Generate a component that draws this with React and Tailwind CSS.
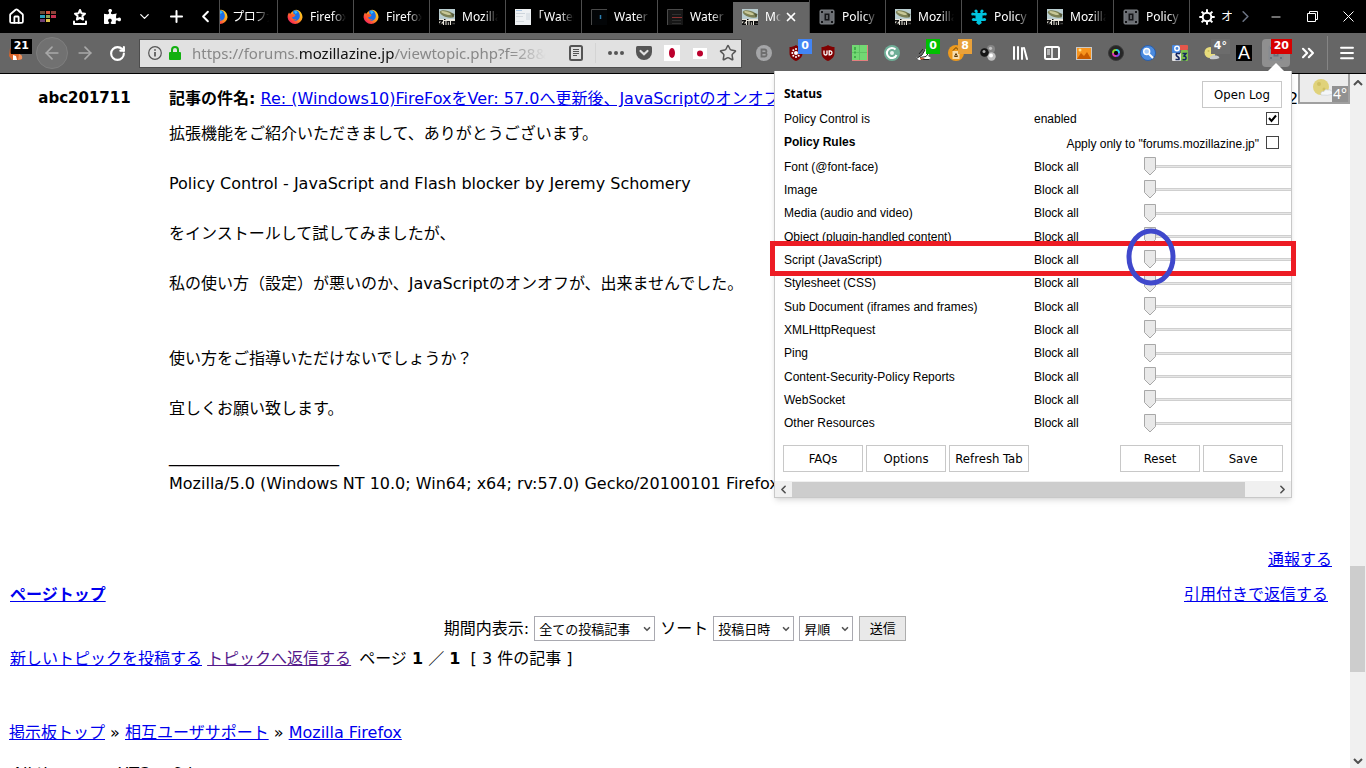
import { useState } from 'react'
import { Home, Plus, ChevronDown, ChevronLeft, ChevronRight, ArrowLeft, ArrowRight, RotateCw, X, Minus, Star, Menu, ChevronsRight } from 'lucide-react'
import { FaPuzzlePiece } from 'react-icons/fa'

// --- FAVICONS ---
function FirefoxIcon() {
  return (
    <svg viewBox="0 0 16 16" className="w-4 h-4 shrink-0">
      <defs>
        <linearGradient id="fxBody" x1="1" y1="0" x2="0" y2="1">
          <stop offset="0" stopColor="#ffe226" />
          <stop offset="0.45" stopColor="#ff9a1f" />
          <stop offset="0.75" stopColor="#ff3b47" />
          <stop offset="1" stopColor="#d5157f" />
        </linearGradient>
      </defs>
      <path d="M2 3.5 L3 5 C5 2 7 1 9 .7 C13 1 15.6 4.5 15.5 8.5 A7.5 7.3 0 0 1 .6 8.5 C.6 6.500 1 5 2 3.500Z" fill="url(#fxBody)" />
      <path d="M6 2 C8 .2 12 1.500 12.500 5 C13.600 8 12 11.500 8.600 11.700 C6 11.800 4.500 10 4.500 8 L7 7.800 L8.500 6 L6.500 5Z" fill="#1a6fe8" />
      <path d="M7 2.500 C8.500 1.500 10 2 10.500 3.500 L8.500 5Z" fill="#2fc0ff" />
      <path d="M2.500 5 L6 5.200 L8.400 6 L7 7.600 L5 8.500 C5.500 10 7.500 11 9.500 10 C8 12.500 4.500 12 3.300 9.500Z" fill="#ff5a2a" />
    </svg>
  )
}

function ZineIcon() {
  return (
    <svg viewBox="0 0 16 16" className="w-4 h-4 shrink-0">
      <rect width="16" height="16" fill="#b9cdd0" />
      <rect y="10" width="16" height="6" fill="#e9e6dc" />
      <ellipse cx="8" cy="5" rx="7.500" ry="3.200" fill="#7c8055" transform="rotate(18 8 5)" />
      <ellipse cx="7" cy="4" rx="5" ry="1.300" fill="#c8c796" transform="rotate(18 7 4)" />
      <path d="M12 4 L15.500 5 L14 9Z" fill="#55583a" />
      <path d="M0 11h4v1.200L2 14.500h2V16H0v-1.500L2 12.500H0zM5 10h1.500v1H5zM5 12h1.500v4H5zM7.500 12h3.500v4H9.700v-2.700h-.8V16H7.500zM12 12h4v2.700h-2.500v.3H16v1h-4z" fill="#111" />
    </svg>
  )
}

function PageIcon() {
  return (
    <svg viewBox="0 0 16 16" className="w-4 h-4 shrink-0">
      <rect width="16" height="16" fill="#eef1f3" />
      <rect x="1" y="1" width="6" height="1" fill="#a9c4e0" />
      <rect x="1" y="4" width="9" height="1" fill="#cdd5dc" />
      <rect x="1" y="7" width="7" height="1" fill="#d4dade" />
      <rect x="11" y="4" width="4" height="7" fill="#dde3e8" />
      <rect x="1" y="12" width="8" height="1" fill="#d4dade" />
    </svg>
  )
}

function DarkIcon({ red }) {
  return (
    <svg viewBox="0 0 16 16" className="w-4 h-4 shrink-0">
      <rect width="16" height="16" fill={red ? '#171717' : '#030507'} />
      <path d="M.5 16V.500H16" fill="none" stroke="#4a4a4a" />
      {red ? <path d="M5 8.500h10" stroke="#8c3030" /> : <path d="M9.500 6v4" stroke="#2b7fb0" strokeWidth="1.500" />}
      {red && <path d="M5 11.500h9M5 14.500h9M5 5.500h9" stroke="#303030" />}
    </svg>
  )
}

function PolicyIcon({ dim }) {
  return (
    <svg viewBox="0 0 16 16" className="w-4 h-4 shrink-0">
      <rect x="1" y="1" width="14" height="14" rx="1" fill={dim ? '#8a8d90' : '#6b6e73'} stroke={dim ? '#858a8f' : '#7d8085'} />
      <g fill={dim ? '#66717c' : '#141518'}>
        <path d="M2 2h2v2H2zM12 2h2v2h-2zM2 12h2v2H2zM12 12h2v2h-2z" />
        <path d="M5.500 4.500h5v7h-5zM7.200 6v4h1.600V6z" fillRule="evenodd" />
      </g>
    </svg>
  )
}

function CyanPuzzleIcon() {
  return (
    <svg viewBox="0 0 16 16" className="w-4 h-4 shrink-0" fill="#00c4de">
      <path d="M3 4h10v2.500h-1.500V9.500H13V12h-3l.8 2L8 16l-2.800-2L6 12H3V9.500h1.500V6.500H3z" />
      <circle cx="5" cy="2" r="1.600" /><circle cx="11" cy="2" r="1.600" />
      <path d="M4.500 2h2v3h-2zM9.500 2h2v3h-2z" />
      <circle cx="1.800" cy="5" r="1.600" /><circle cx="14.200" cy="5" r="1.600" />
      <circle cx="2.500" cy="10.500" r="1.600" /><circle cx="13.500" cy="10.500" r="1.600" />
    </svg>
  )
}

function GearIcon() {
  return (
    <svg viewBox="0 0 16 16" className="w-4 h-4 shrink-0" fill="none" stroke="#fff" strokeWidth="2">
      <circle cx="8" cy="8" r="4.300" />
      <path d="M8 .3v3.200M8 12.500v3.200M.3 8h3.200M12.500 8h3.200M2.600 2.600l2.200 2.200M11.200 11.200l2.200 2.200M2.600 13.400l2.200-2.200M11.200 4.800l2.200-2.200" />
    </svg>
  )
}

const tabs = [
  { icon: <FirefoxIcon />, title: 'Firefox' },
  { icon: <FirefoxIcon />, title: 'Firefox' },
  { icon: <ZineIcon />, title: 'Mozilla' },
  { icon: <PageIcon />, title: '「Water' },
  { icon: <DarkIcon />, title: 'Water' },
  { icon: <DarkIcon red />, title: 'Water' },
  { icon: <ZineIcon />, title: 'Moz', active: true },
  { icon: <PolicyIcon />, title: 'Policy' },
  { icon: <ZineIcon />, title: 'Mozilla' },
  { icon: <CyanPuzzleIcon />, title: 'Policy' },
  { icon: <ZineIcon />, title: 'Mozilla' },
  { icon: <PolicyIcon />, title: 'Policy' },
]

function BarButton({ label, className = 'w-8', children }) {
  return (
    <button aria-label={label} className={`${className} h-full shrink-0 flex items-center justify-center relative`}>
      {children}
    </button>
  )
}

function Tab({ icon, title, active }) {
  return (
    <div className={`w-[76px] shrink-0 flex items-center gap-[7px] pl-[9px] overflow-hidden ${active ? 'bg-[#666] mt-0.5 h-[31px] pb-0.5' : 'h-full border-l border-[#4d4d4d]'}`}>
      {icon}
      <span className={`overflow-hidden whitespace-nowrap text-xs [mask-image:linear-gradient(to_right,#000_60%,transparent)] ${active ? 'w-4' : 'w-9 [font-feature-settings:"halt"]'}`}>{title}</span>
      {active && <button aria-label="Close tab" className="-ml-1"><X size={14} strokeWidth={3} /></button>}
    </div>
  )
}

function TabBar() {
  return (
    <div className="h-[33px] shrink-0 flex bg-black text-white">
      <BarButton label="Home"><Home size={17} strokeWidth={2.500} /></BarButton>
      <BarButton label="Tiles">
        <svg viewBox="0 0 16 11" className="w-4 h-[11px]">
          <path d="M0 0h5v3H0z" fill="#6d4a36" /><path d="M6 0h4v3H6z" fill="#d4533c" /><path d="M11 0h5v3h-5z" fill="#8d4038" />
          <path d="M0 4h5v3H0z" fill="#2aa0bd" /><path d="M6 4h4v3H6z" fill="#8aa65a" /><path d="M11 4h5v3h-5z" fill="#c7304f" />
          <path d="M0 8h5v3H0z" fill="#6e3f74" /><path d="M6 8h4v3H6z" fill="#e0c24a" />
        </svg>
      </BarButton>
      <BarButton label="Bookmarks">
        <svg viewBox="0 0 16 18" className="w-4 h-[18px]" fill="none" stroke="#fff" strokeWidth="2" strokeLinejoin="round">
          <path d="M8 2l1.500 3.300 3.500.4-2.600 2.400.7 3.400L8 9.800l-3.100 1.700.7-3.400L3 5.700l3.500-.4z" />
          <path d="M2 13.500v2.500h12v-2.500" strokeLinecap="round" />
        </svg>
      </BarButton>
      <BarButton label="Add-ons"><FaPuzzlePiece size={17} /></BarButton>
      <BarButton label="More"><ChevronDown size={15} strokeWidth={2} /></BarButton>
      <BarButton label="New tab"><Plus size={19} strokeWidth={2.500} /></BarButton>
      <BarButton label="Scroll tabs left" className="w-[27px]"><ChevronLeft size={19} strokeWidth={2.500} /></BarButton>
      <div className="flex flex-1 min-w-0 overflow-hidden">
        <div className="w-[58px] shrink-0 h-full flex items-center justify-end border-l border-[#4d4d4d] overflow-hidden">
          <div className="w-2 flex justify-end overflow-hidden"><FirefoxIcon /></div>
          <span className="w-9 ml-[5px] mr-2 overflow-hidden whitespace-nowrap text-xs [font-feature-settings:'palt'] [mask-image:linear-gradient(to_right,#000_60%,transparent)]">プロファ</span>
        </div>
        {tabs.map((tab, i) => <Tab key={i} {...tab} />)}
        <div className="h-full flex-1 flex items-center gap-1.5 pl-[9px] border-l border-[#4d4d4d] overflow-hidden">
          <GearIcon />
          <span className="text-xs whitespace-nowrap">オ</span>
        </div>
      </div>
      <BarButton label="Scroll tabs right" className="w-[26px]"><ChevronRight size={19} strokeWidth={2} className="text-gray-500" /></BarButton>
      <BarButton label="Minimize" className="w-9"><Minus size={14} strokeWidth={1.500} /></BarButton>
      <BarButton label="Restore" className="w-9">
        <svg viewBox="0 0 11 11" className="w-[11px] h-[11px]" fill="none" stroke="#fff"><path d="M.5 2.500h8v8h-8zM2.500 2.500v-2h8v8h-2" /></svg>
      </BarButton>
      <BarButton label="Close" className="w-9">
        <svg viewBox="0 0 11 11" className="w-[11px] h-[11px]" stroke="#fff"><path d="M.5.500l10 10M10.500.500l-10 10" /></svg>
      </BarButton>
    </div>
  )
}

function Badge({ className, children }) {
  return (
    <span className={`absolute top-1.5 h-[15px] min-w-[14px] px-[3px] flex items-center justify-center text-[11px] font-bold text-white font-['DejaVu_Sans',sans-serif] ${className}`}>
      {children}
    </span>
  )
}

const svg16 = { viewBox: '0 0 16 16', className: 'w-4 h-4' }

function Toolbar() {
  return (
    <div className="flex h-full text-white">
      <BarButton label="B">
        <svg {...svg16}><circle cx="8" cy="8" r="8" fill="#a5a6a8" /><path d="M5.500 4.500h3.200a1.700 1.700 0 0 1 .6 3.300 1.900 1.900 0 0 1-.5 3.700H5.500z M5.500 8h3.500" fill="none" stroke="#6e6e6e" strokeWidth="1.800" /></svg>
      </BarButton>
      <BarButton label="Shield">
        <svg {...svg16}>
          <path d="M8 0C6 1.500 3.500 2 1.500 2v6c0 4 3 6.500 6.500 8 3.500-1.500 6.500-4 6.500-8V2C12.500 2 10 1.500 8 0z" fill="#800000" />
          <g fill="#fff"><circle cx="8" cy="8" r="2" /><circle cx="8" cy="4" r="1" /><circle cx="8" cy="12" r="1" /><circle cx="4.300" cy="8" r="1" /><circle cx="11.700" cy="8" r="1" /><circle cx="5.300" cy="5.300" r="1" /><circle cx="5.300" cy="10.700" r="1" /><circle cx="10.700" cy="10.700" r="1" /></g>
        </svg>
        <Badge className="bg-[#4285f4] right-0">0</Badge>
      </BarButton>
      <BarButton label="uBlock">
        <svg {...svg16}>
          <path d="M8 0C6 1.500 3.500 2 1.500 2v6c0 4 3 6.500 6.500 8 3.500-1.500 6.500-4 6.500-8V2C12.500 2 10 1.500 8 0z" fill="#800000" />
          <path d="M4 5.500v3q0 1.500 1.500 1.500T7 8.500v-3" fill="none" stroke="#fff" strokeWidth="1.300" /><path d="M9.200 5.800v4h1q1.800-.3 1.800-2t-1.800-2z" fill="none" stroke="#fff" strokeWidth="1.300" />
        </svg>
      </BarButton>
      <BarButton label="Grid">
        <svg {...svg16}><rect width="16" height="16" fill="#e37f7f" /><rect width="15" height="15" fill="#72d873" /><path d="M7.500 0v15M0 7.500h15" stroke="#5fc264" /><path d="M3 2v3M3 6.500v2M3 11v2" stroke="#3fae49" strokeWidth="2" /></svg>
      </BarButton>
      <BarButton label="Reload session">
        <svg {...svg16}><circle cx="8" cy="8" r="8" fill="#6fae97" /><path d="M11.500 4.500A5 5 0 1 0 12.500 10" fill="none" stroke="#fff" strokeWidth="2" /><circle cx="8" cy="8" r="2" fill="#e9f3ef" /></svg>
      </BarButton>
      <BarButton label="Privacy">
        <svg {...svg16}><path d="M0 13l5-2 6-9 4 4-3 5 3 2-4 2H3z" fill="#fff" /><path d="M.5 13.500L6 10l3-5M4 12.500l6-1 3-4M3 9l4-5M5 14.500h8" fill="none" stroke="#222" /><path d="M4 12.500l5 .5-2 1.500H4z" fill="#c96a4a" /></svg>
        <Badge className="bg-[#00c000] right-0">0</Badge>
      </BarButton>
      <BarButton label="Clean">
        <svg {...svg16}><circle cx="8" cy="8" r="8" fill="#ef9a1c" /><path d="M4.500 6h7v8h-7z" fill="#f7dcae" /><path d="M6.500 11.500L8 8.500l1.500 3zM5 5.500l3-3 3 3" fill="none" stroke="#5c3a08" /></svg>
        <Badge className="bg-[#e9a13a] right-0">8</Badge>
      </BarButton>
      <BarButton label="Spheres">
        <svg {...svg16}><circle cx="11" cy="4" r="4" fill="#858585" /><circle cx="10.500" cy="3.300" r="1.600" fill="#c4c4c4" /><circle cx="11.500" cy="11.500" r="4.200" fill="#bfbfbf" /><circle cx="11" cy="10.500" r="2" fill="#fff" /><circle cx="4.500" cy="7.500" r="4.300" fill="#151515" /><circle cx="4" cy="6.500" r="1.500" fill="#aaa" /></svg>
      </BarButton>
      <BarButton label="Library">
        <svg {...svg16} stroke="#fff" strokeWidth="2" strokeLinecap="round"><path d="M2 2v12M6 2v12M10 3v11M12 3l3 11" /></svg>
      </BarButton>
      <BarButton label="Sidebar">
        <svg {...svg16} fill="none" stroke="#fff"><rect x="1" y="2" width="14" height="12" rx="1.500" strokeWidth="2" /><path d="M8 2v12" strokeWidth="1.500" /><path d="M3 5h3M3 7h3M3 9h3" /></svg>
      </BarButton>
      <BarButton label="Images">
        <svg {...svg16}><rect x=".5" y="2.500" width="15" height="12" fill="#f7941e" stroke="#c9c9c9" /><path d="M1 14l4-6 3 3 3-4 4 7z" fill="#c85a00" /><circle cx="4" cy="5" r="1.500" fill="#ffe08a" /></svg>
      </BarButton>
      <BarButton label="Colour lens">
        <svg {...svg16} fill="none" strokeWidth="2"><circle cx="8" cy="8" r="7.500" fill="#262626" stroke="#3a3a3a" strokeWidth="1" /><path d="M8 5A3 3 0 0 1 11 8" stroke="#2bd4e8" /><path d="M11 8A3 3 0 0 1 8 11" stroke="#7a4ce0" /><path d="M8 11A3 3 0 0 1 5 8" stroke="#e03bb0" /><path d="M5 8A3 3 0 0 1 8 5" stroke="#8fd42b" /><circle cx="8" cy="8" r="2" fill="#050505" /></svg>
      </BarButton>
      <BarButton label="Search">
        <svg {...svg16}><circle cx="8" cy="8" r="7.500" fill="#4a8be0" stroke="#2b5ea8" /><circle cx="6.700" cy="6.500" r="3" fill="#a9cdfa" stroke="#fff" strokeWidth="1.400" /><path d="M9 9l4 4" stroke="#fff" strokeWidth="2" /></svg>
      </BarButton>
      <BarButton label="S3">
        <svg {...svg16}>
          <rect x="7" width="9" height="5" rx="1" fill="#e4574b" /><rect x="9" y="5" width="7" height="11" rx="1" fill="#7cc04b" /><rect width="8" height="8" rx="1" fill="#4a88df" /><rect y="8" width="9" height="8" rx="1" fill="#e4e4e4" />
          <circle cx="5" cy="3.500" r="2.200" fill="none" stroke="#fff" strokeWidth="1.500" />
          <path d="M8 8.500H4.500Q3.500 10.500 5.500 11.500T7 14.500H3.500M10.500 8.500h3.500l-2 2.500q2.500.5 2 2.500T10.500 14.500" fill="none" stroke="#16255f" strokeWidth="1.500" />
        </svg>
      </BarButton>
      <BarButton label="Weather">
        <svg {...svg16}><circle cx="6" cy="7.500" r="5.500" fill="#e8dc7c" /><circle cx="4.500" cy="6" r="1" fill="#cfc05c" /><path d="M6 14q-1-3 2-3 1-2 3.500-.5Q15 10 15.500 13q-4 2-9.500 1z" fill="#c9ccd0" /></svg>
        <Badge className="bg-[#6c6c6c] -right-0.5">4°</Badge>
      </BarButton>
      <BarButton label="Font">
        <span className="w-4 h-4 bg-black flex items-center justify-center text-lg leading-4 font-['Liberation_Sans',sans-serif]">A</span>
      </BarButton>
      <BarButton label="Policy Control">
        <span className="w-7 h-7 rounded-sm bg-[#8f8f8f] flex items-center justify-center"><PolicyIcon dim /></span>
        <Badge className="bg-[#d70000] right-0">20</Badge>
        <svg viewBox="0 0 20 10" className="absolute left-1.5 bottom-0 w-5 h-[10px]"><path d="M0 10L10 0l10 10z" fill="#fff" /></svg>
      </BarButton>
      <BarButton label="More tools"><ChevronsRight size={20} strokeWidth={2.500} /></BarButton>
      <div className="w-px h-[34px] bg-[#858585] my-[3px] ml-[3px]" />
      <BarButton label="Menu" className="w-[38px]"><Menu size={18} strokeWidth={2.500} /></BarButton>
    </div>
  )
}

function NavBar() {
  return (
    <div className="h-[41px] shrink-0 flex items-center bg-[#666] border-b border-black text-white">
      <BarButton label="Fox" className="w-9">
        <svg viewBox="0 0 16 16" className="w-4 h-4 mr-1"><path d="M2 3l4 4 4 1 4 3v3l-3 1H4l-3-4z" fill="#d9642a" /><path d="M5 10l3 1 1 4H5z" fill="#fff" /><path d="M11 9q4 1 3 5l-4 1z" fill="#f0905a" /><path d="M2 3l2 4-2 2z" fill="#8a3a16" /></svg>
        <Badge className="bg-black right-1">21</Badge>
      </BarButton>
      <button aria-label="Back" className="w-8 h-8 shrink-0 rounded-full border border-[#7e7e7e] bg-[#717171] text-[#a9a9a9] flex items-center justify-center"><ArrowLeft size={20} strokeWidth={2} /></button>
      <BarButton label="Forward" className="w-[34px]"><ArrowRight size={20} strokeWidth={2} className="text-[#a9a9a9]" /></BarButton>
      <BarButton label="Reload" className="w-[31px]"><RotateCw size={17} strokeWidth={3} /></BarButton>
      <div className="flex-1 min-w-0 h-[29px] ml-1.5 mr-1.5 flex items-center bg-[#e1e1e1] border border-[#4d4d4d] text-[#555]">
        <svg viewBox="0 0 14 14" className="w-[14px] h-[14px] ml-2 shrink-0" fill="none" stroke="#555"><circle cx="7" cy="7" r="6.300" strokeWidth="1.200" /><path d="M7 6v4.500M7 3.300v1.500" strokeWidth="1.700" /></svg>
        <svg viewBox="0 0 12 14" className="w-3 h-[14px] ml-[7px] shrink-0"><path d="M3 7V4a3 3 0 0 1 6 0v3" fill="none" stroke="#12b010" strokeWidth="2" /><rect y="6" width="12" height="8" rx="1" fill="#12b010" /></svg>
        <div className="flex-1 min-w-0 pl-[11px] overflow-hidden whitespace-nowrap text-[15px] text-[#888]">
          <span className="inline-block [mask-image:linear-gradient(to_right,#000_90%,transparent)]">
            https://forums.<span className="text-[#111]">mozillazine.jp</span>/viewtopic.php?f=28&amp;
          </span>
        </div>
        <svg viewBox="0 0 14 16" className="w-[14px] h-4 shrink-0" fill="none" stroke="#555"><rect x="1" y="1" width="12" height="14" rx="1.500" strokeWidth="2" /><path d="M4 4.500h6M4 6.500h6M4 8.500h6M4 10.500h4" /></svg>
        <div className="w-px h-5 bg-[#d4d4d4] ml-3 mr-3" />
        <svg viewBox="0 0 16 4" className="w-4 h-1 shrink-0" fill="#555"><circle cx="2" cy="2" r="2" /><circle cx="8" cy="2" r="2" /><circle cx="14" cy="2" r="2" /></svg>
        <svg viewBox="0 0 16 16" className="w-4 h-4 ml-3 shrink-0"><path d="M1.500 1h13Q16 1 16 2.500V7A8 8 0 0 1 0 7V2.500Q0 1 1.500 1z" fill="#555" /><path d="M4.500 6L8 9.200 11.500 6" fill="none" stroke="#e1e1e1" strokeWidth="2.200" strokeLinecap="round" /></svg>
        <svg viewBox="0 0 16 16" className="w-4 h-4 ml-3 shrink-0"><rect width="16" height="16" fill="#fff" /><ellipse cx="8" cy="8" rx="3" ry="5" fill="#bc002d" /></svg>
        <svg viewBox="0 0 14 11" className="w-[14px] h-[11px] ml-[13px] shrink-0"><rect width="14" height="11" fill="#fff" /><circle cx="7" cy="5.500" r="3" fill="#bc002d" /></svg>
        <Star size={18} strokeWidth={2} className="ml-3 mr-1 shrink-0" />
      </div>
      <Toolbar />
    </div>
  )
}

// --- POLICY POPUP ---
const rules = [
  'Font (@font-face)',
  'Image',
  'Media (audio and video)',
  'Object (plugin-handled content)',
  'Script (JavaScript)',
  'Stylesheet (CSS)',
  'Sub Document (iframes and frames)',
  'XMLHttpRequest',
  'Ping',
  'Content-Security-Policy Reports',
  'WebSocket',
  'Other Resources',
]

function PopupButton({ children }) {
  return <button className="w-20 h-[27px] border border-[#c8c8c8] bg-white text-[13px] leading-5 whitespace-nowrap font-['DejaVu_Sans_Condensed','Noto_Sans',sans-serif]">{children}</button>
}

function RuleRow({ name, tall }) {
  const id = name.split(' ')[0].toLowerCase()
  return (
    <div className={`flex items-center ${tall ? 'h-6' : 'h-[23px]'}`}>
      <label htmlFor={id} className="w-[250px] shrink-0">{name}</label>
      <span className="w-[110px] shrink-0">Block all</span>
      <div className="relative flex-1 min-w-0 h-full flex items-center overflow-hidden">
        <input
          id={id}
          type="range"
          min="0"
          max="3"
          defaultValue="0"
          className="w-44 shrink-0 ml-px h-[3px] appearance-none border-y border-[#cfcfcf] bg-[#e6e6e6] [&::-webkit-slider-thumb]:appearance-none [&::-webkit-slider-thumb]:w-3 [&::-webkit-slider-thumb]:h-[18px] [&::-webkit-slider-thumb]:opacity-0"
        />
        <svg viewBox="0 0 12 19" className="absolute left-0 w-3 h-[19px] pointer-events-none"><path d="M.5.500h11v12L6 18 .5 12.500z" fill="#e9e9e9" stroke="#a8a8a8" /></svg>
      </div>
    </div>
  )
}

function CheckBox({ id, checked, onChange }) {
  return (
    <span className="relative w-[13px] h-[13px] shrink-0">
      <input id={id} type="checkbox" checked={checked} onChange={onChange} className="block w-[13px] h-[13px] appearance-none border border-[#444] bg-white" />
      {checked && <svg viewBox="0 0 13 13" className="absolute inset-0 pointer-events-none"><path d="M3 6l2.500 3L10 3.500" fill="none" stroke="#000" strokeWidth="2" /></svg>}
    </span>
  )
}

function PolicyPopup() {
  const [enabled, setEnabled] = useState(true)
  const [siteOnly, setSiteOnly] = useState(false)

  return (
    <div className="absolute top-[71px] right-[74px] w-[518px] bg-white border-x border-b border-[#c8c8c8] shadow-md text-xs text-black font-['Liberation_Sans',sans-serif]">
      <div className="pl-[9px]">
        <div className="flex items-start justify-between pt-2.5 pr-[9px] h-9">
          <h2 className="font-bold font-['Noto_Sans',sans-serif] pt-[5px]">Status</h2>
          <PopupButton>Open Log</PopupButton>
        </div>
        <div className="flex items-center h-[23px] pr-3">
          <label htmlFor="enabled" className="w-[250px]">Policy Control is</label>
          <span className="flex-1">enabled</span>
          <CheckBox id="enabled" checked={enabled} onChange={() => setEnabled(!enabled)} />
        </div>
        <div className="flex items-center h-6 pr-3 mb-px">
          <h2 className="font-bold flex-1">Policy Rules</h2>
          <label htmlFor="site" className="pt-1 mr-[7px]">Apply only to "forums.mozillazine.jp"</label>
          <CheckBox id="site" checked={siteOnly} onChange={() => setSiteOnly(!siteOnly)} />
        </div>
        {rules.map((name, i) => <RuleRow key={name} name={name} tall={i % 3 === 2} />)}
      </div>
      <div className="flex gap-[3px] pl-2 pr-2 pt-2.5 pb-[9px]">
        <PopupButton>FAQs</PopupButton>
        <PopupButton>Options</PopupButton>
        <PopupButton>Refresh Tab</PopupButton>
        <div className="flex-1" />
        <PopupButton>Reset</PopupButton>
        <PopupButton>Save</PopupButton>
      </div>
      <div className="h-4 flex items-center bg-[#f0f0f0] text-[#505050]">
        <ChevronLeft size={13} strokeWidth={3} className="mx-0.5" />
        <div className="w-[453px] h-[15px] bg-[#cdcdcd]" />
        <ChevronRight size={13} strokeWidth={3} className="ml-auto mr-0.5" />
      </div>
      {/* hand-drawn marks over the script rule */}
      <div className="absolute -left-[5px] -right-[5px] top-[170px] h-[35px] border-[5px] border-[#ed1c24] pointer-events-none" />
      <svg viewBox="0 0 50 60" className="absolute left-[351px] top-[156px] w-[50px] h-[60px] pointer-events-none">
        <ellipse cx="25" cy="30" rx="22" ry="26" fill="none" stroke="#3f48cc" strokeWidth="5" />
      </svg>
    </div>
  )
}

// --- FORUM PAGE ---
const blue = 'text-[#0000ee] underline'

function Select({ label, value, className }) {
  return (
    <span className={`relative inline-flex ${className}`}>
      <select aria-label={label} defaultValue={value} className="w-full h-[25px] pl-1 appearance-none border border-[#a9a9b0] bg-white text-[13px]">
        <option>{value}</option>
      </select>
      <ChevronDown size={10} strokeWidth={4} className="absolute right-[3px] top-2 text-[#555] pointer-events-none" />
    </span>
  )
}

function ForumPage() {
  return (
    <main className="flex-1 min-w-0 overflow-hidden bg-white text-base leading-[25px] text-black relative font-['DejaVu_Sans','Noto_Sans_CJK_JP',sans-serif]">
      <article className="flex pt-3">
        <div className="w-[169px] shrink-0 text-center font-bold text-[15px]">abc201711</div>
        <div className="flex-1 min-w-0">
          <div className="flex h-[25px] whitespace-nowrap">
            <div className="flex-1 min-w-0 overflow-hidden">
              <b>記事の件名:</b> <a href="#post" className={blue}>Re: (Windows10)FireFoxをVer: 57.0へ更新後、JavaScriptのオンオフ</a>
            </div>
            <div className="w-[62px] overflow-hidden">2017</div>
          </div>
          <div className="pt-[10px] *:h-[25px] *:whitespace-nowrap">
            <p>拡張機能をご紹介いただきまして、ありがとうございます。</p>
            <p className="mt-[25px]">Policy Control - JavaScript and Flash blocker by Jeremy Schomery</p>
            <p className="mt-[25px]">をインストールして試してみましたが、</p>
            <p className="mt-[25px]">私の使い方（設定）が悪いのか、JavaScriptのオンオフが、出来ませんでした。</p>
            <p className="mt-[50px]">使い方をご指導いただけないでしょうか？</p>
            <p className="mt-[25px]">宜しくお願い致します。</p>
            <p className="mt-[25px] text-xl leading-[19px]">_________________</p>
            <p>Mozilla/5.0 (Windows NT 10.0; Win64; x64; rv:57.0) Gecko/20100101 Firefox/57.0</p>
          </div>
        </div>
      </article>
      <div className="mt-[51px] h-[25px] pr-[18px] text-right"><a href="#report" className={blue}>通報する</a></div>
      <div className="mt-2.5 h-[25px] pl-2.5 pr-[22px] flex justify-between">
        <a href="#top" className={`${blue} font-bold`}>ページトップ</a>
        <a href="#quote" className={blue}>引用付きで返信する</a>
      </div>
      <form className="mt-[9px] h-[25px] flex items-center justify-center" onSubmit={(e) => e.preventDefault()}>
        <span className="mr-[5px]">期間内表示:</span>
        <Select label="期間内表示" value="全ての投稿記事" className="w-[121px]" />
        <span className="mx-[5px]">ソート</span>
        <Select label="ソート" value="投稿日時" className="w-[81px]" />
        <Select label="順序" value="昇順" className="w-[54px] ml-[5px]" />
        <button className="w-[47px] h-[25px] ml-1.5 border border-[#adadad] bg-[#e9e9e9] text-[13px] leading-5">送信</button>
      </form>
      <div className="mt-[5px] h-[25px] pl-2.5">
        <a href="#new" className={blue}>新しいトピックを投稿する</a> <a href="#reply" className="text-[#551a8b] underline">トピックへ返信する</a>
        <span className="ml-2">ページ <b>1</b> ／ <b>1</b>&nbsp; [ 3 件の記事 ]</span>
      </div>
      <nav className="mt-[49px] h-[25px] pl-[9px]">
        <a href="#index" className={blue}>掲示板トップ</a> » <a href="#support" className={blue}>相互ユーザサポート</a> » <a href="#firefox" className={blue}>Mozilla Firefox</a>
      </nav>
      <p className="mt-4 pl-3 whitespace-nowrap">All times are UTC + 9 hours</p>

      {/* weather overlay */}
      <div className="absolute top-0 right-0 w-[52px] h-[30px] bg-[#ececec] border-2 border-t-0 border-[#a0a0a0]">
        <svg viewBox="0 0 34 22" className="absolute left-3 top-[3px] w-[34px] h-[22px]">
          <circle cx="9" cy="10" r="8" fill="#e0d27a" /><circle cx="7" cy="7" r="2" fill="#cfc060" /><circle cx="12" cy="12" r="1.500" fill="#cfc060" />
          <path d="M9 18q-1-4 3-3.500 1-3 4-1.500 4-1 5 4-5 2-12 1z" fill="#f4f6f8" stroke="#c6cbd0" strokeWidth=".6" />
        </svg>
        <span className="absolute right-0 bottom-0 w-4 h-4 bg-[#919191] text-white text-sm leading-4 text-center font-['Noto_Sans',sans-serif]">4°</span>
      </div>
    </main>
  )
}

export default function App() {
  return (
    <div className="h-screen w-full relative flex flex-col overflow-hidden font-['Noto_Sans','Noto_Sans_CJK_JP',sans-serif]">
      <TabBar />
      <NavBar />
      <div className="flex-1 min-h-0 flex">
        <ForumPage />
        <div className="w-4 shrink-0 flex flex-col items-center bg-[#f0f0f0] text-[#505050]">
          <svg viewBox="0 0 10 6" className="w-2.5 h-1.5 mt-1.5" fill="none" stroke="currentColor" strokeWidth="2"><path d="M1 5l4-4 4 4" /></svg>
          <div className="grow-[478]" />
          <div className="w-full pr-px"><div className="h-[106px] bg-[#cdcdcd]" /></div>
          <div className="grow-[86]" />
          <svg viewBox="0 0 10 6" className="w-2.5 h-1.5 mb-1" fill="none" stroke="currentColor" strokeWidth="2"><path d="M1 1l4 4 4-4" /></svg>
        </div>
      </div>
      <PolicyPopup />
    </div>
  )
}
